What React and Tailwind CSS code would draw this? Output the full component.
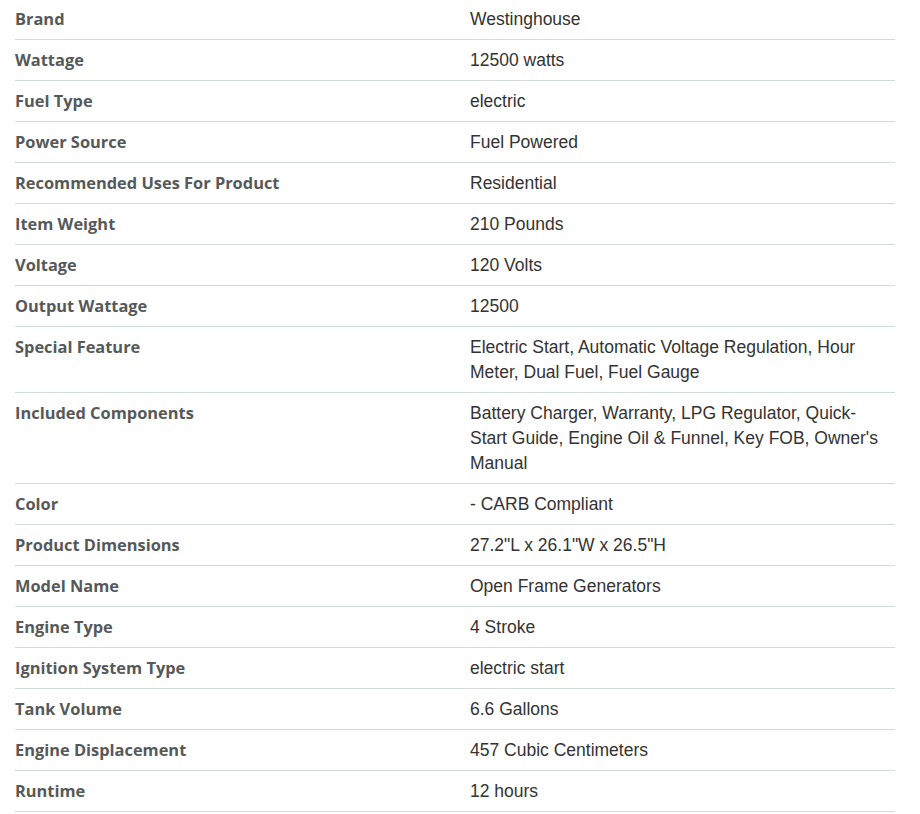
const rows = [
  ['Brand', 'Westinghouse'],
  ['Wattage', '12500 watts'],
  ['Fuel Type', 'electric'],
  ['Power Source', 'Fuel Powered'],
  ['Recommended Uses For Product', 'Residential'],
  ['Item Weight', '210 Pounds'],
  ['Voltage', '120 Volts'],
  ['Output Wattage', '12500'],
  ['Special Feature', 'Electric Start, Automatic Voltage Regulation, Hour Meter, Dual Fuel, Fuel Gauge'],
  ['Included Components', "Battery Charger, Warranty, LPG Regulator, Quick-Start Guide, Engine Oil & Funnel, Key FOB, Owner's Manual"],
  ['Color', '- CARB Compliant'],
  ['Product Dimensions', '27.2"L x 26.1"W x 26.5"H'],
  ['Model Name', 'Open Frame Generators'],
  ['Engine Type', '4 Stroke'],
  ['Ignition System Type', 'electric start'],
  ['Tank Volume', '6.6 Gallons'],
  ['Engine Displacement', '457 Cubic Centimeters'],
  ['Runtime', '12 hours'],
];

export default function App() {
  return (
    <div className="bg-white px-[15px] w-[910px]">
      {rows.map(([label, value]) => (
        <div
          key={label}
          className="grid grid-cols-[455px_1fr] border-b border-[#d5d9d9] pt-[7px] first:pt-[6px] pb-[8px] leading-[25px]"
        >
          <div className="font-['Open_Sans',sans-serif] font-bold text-[16.4px] text-[#565959]">{label}</div>
          <div className="font-['Liberation_Sans',Arial,sans-serif] text-[17.5px] text-[#333] pr-[12px] translate-y-px">{value}</div>
        </div>
      ))}
    </div>
  );
}
